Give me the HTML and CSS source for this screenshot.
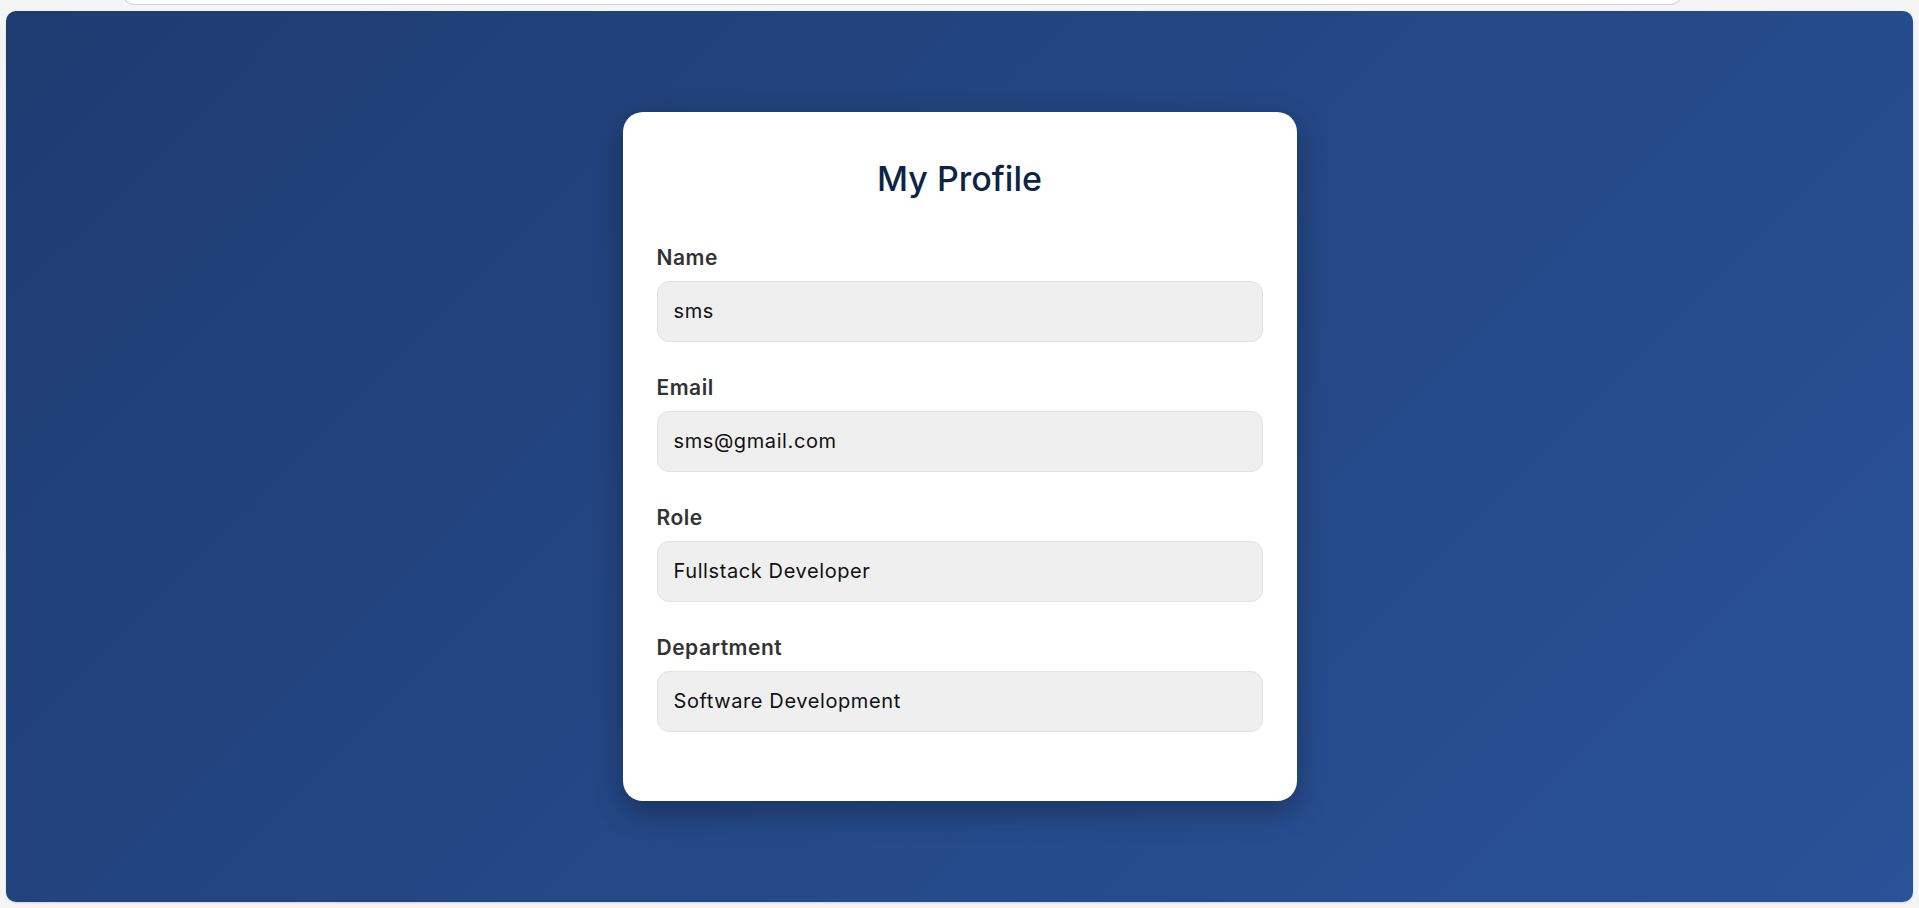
FILE: index.html
```html
<!DOCTYPE html>
<html lang="en">
  <head>
    <meta charset="UTF-8" />
    <meta name="viewport" content="width=device-width, initial-scale=1.0" />
    <title>My Profile</title>
    <link rel="stylesheet" href="styles.css">
  </head>
  <body>
    <div class="topbar"></div>

    <div id="main">
      <div class="profile-card">
        <h2>My Profile</h2>

        <div class="field">
          <label>Name</label>
          <div class="value">sms</div>
        </div>

        <div class="field">
          <label>Email</label>
          <div class="value">sms@gmail.com</div>
        </div>

        <div class="field">
          <label>Role</label>
          <div class="value">Fullstack Developer</div>
        </div>

        <div class="field">
          <label>Department</label>
          <div class="value">Software Development</div>
        </div>
      </div>
    </div>
  </body>
</html>
```

FILE: styles.css
```css
* {
  box-sizing: border-box;
}

body {
  margin: 0;
  background-color: #f5f5f5;
  font-family: Inter, "Noto Sans", sans-serif;
  height: 908px;
  overflow: hidden;
}

.topbar {
  width: 1561px;
  height: 25px;
  margin: -20px 0 0 122px;
  background-color: #fff;
  border: 1px solid #cfcfcf;
  border-radius: 22px;
}

#main {
  margin: 6px 6px 0;
  height: 891px;
  border-radius: 10px;
  background: linear-gradient(135deg, #1e3c72, #2a5298);
  box-shadow: 0 1px 2px rgba(0, 0, 0, 0.15);
  display: flex;
  align-items: center;
  justify-content: center;
}

.profile-card {
  width: 674px;
  padding: 46px 34px 34px;
  background-color: #fff;
  border-radius: 20px;
  box-shadow: 0 10px 30px rgba(0, 0, 0, 0.3);
}

h2 {
  margin: 0 0 48px;
  font-size: 34px;
  font-weight: 500;
  line-height: 41px;
  text-align: center;
  color: #0d2545;
}

.field {
  margin-bottom: 35px;
}

label {
  display: block;
  margin-bottom: 12px;
  font-size: 21px;
  font-weight: 600;
  letter-spacing: 0.5px;
  line-height: 22px;
  color: #333;
}

.value {
  height: 61px;
  padding: 0 16px;
  line-height: 59px;
  font-size: 20px;
  letter-spacing: 0.6px;
  color: #111;
  background-color: #efefef;
  border: 1px solid #e2e2e2;
  border-radius: 12px;
}
```
